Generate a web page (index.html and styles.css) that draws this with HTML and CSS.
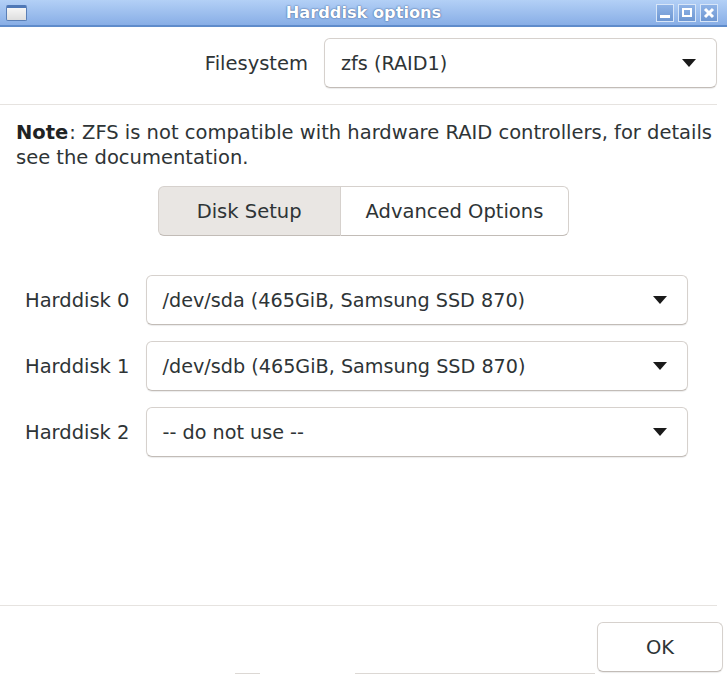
FILE: index.html
```html
<!DOCTYPE html>
<html lang="en">
<head>
    <meta charset="UTF-8">
    <title>Harddisk options</title>
    <link rel="stylesheet" href="styles.css">
</head>
<body>
    <div class="window">
        <div class="titlebar">
            <div class="app-icon"></div>
            <div class="title">Harddisk options</div>
            <div class="wm-buttons">
                <div class="wm-btn"><span class="min-bar"></span></div>
                <div class="wm-btn"><span class="max-box"></span></div>
                <div class="wm-btn">
                    <svg width="12" height="12" viewBox="0 0 12 12"><path d="M2 2 L10 10 M10 2 L2 10" stroke="#fff" stroke-width="3"/></svg>
                </div>
            </div>
        </div>

        <div class="content">
            <div class="fs-row">
                <label>Filesystem</label>
                <div class="select fs-select">
                    <span>zfs (RAID1)</span>
                    <svg class="arrow" width="16" height="10" viewBox="0 0 16 10"><path d="M1 1 H15 L8 9 Z" fill="#1a1a1a"/></svg>
                </div>
            </div>

            <div class="separator"></div>

            <p class="note"><b>Note</b>: ZFS is not compatible with hardware RAID controllers, for details see the documentation.</p>

            <div class="tabs">
                <div class="tab active">Disk Setup</div>
                <div class="tab">Advanced Options</div>
            </div>

            <div class="disks">
                <div class="disk-row">
                    <label>Harddisk 0</label>
                    <div class="select">
                        <span>/dev/sda (465GiB, Samsung SSD 870)</span>
                        <svg class="arrow" width="16" height="10" viewBox="0 0 16 10"><path d="M1 1 H15 L8 9 Z" fill="#1a1a1a"/></svg>
                    </div>
                </div>
                <div class="disk-row">
                    <label>Harddisk 1</label>
                    <div class="select">
                        <span>/dev/sdb (465GiB, Samsung SSD 870)</span>
                        <svg class="arrow" width="16" height="10" viewBox="0 0 16 10"><path d="M1 1 H15 L8 9 Z" fill="#1a1a1a"/></svg>
                    </div>
                </div>
                <div class="disk-row">
                    <label>Harddisk 2</label>
                    <div class="select">
                        <span>-- do not use --</span>
                        <svg class="arrow" width="16" height="10" viewBox="0 0 16 10"><path d="M1 1 H15 L8 9 Z" fill="#1a1a1a"/></svg>
                    </div>
                </div>
            </div>
        </div>

        <div class="footer">
            <div class="separator"></div>
            <div class="actions">
                <button class="ok">OK</button>
            </div>
            <div class="ghost">
                <span class="g1"></span>
                <span class="g2"></span>
            </div>
        </div>
    </div>
</body>
</html>
```

FILE: styles.css
```css
body {
    margin: 0;
    font-family: "DejaVu Sans", sans-serif;
    font-size: 19.5px;
    color: #2e3436;
    background: #fff;
}
.window {
    width: 727px;
    height: 675px;
    display: flex;
    flex-direction: column;
    overflow: hidden;
}
.titlebar {
    height: 25px;
    display: grid;
    grid-template-columns: 1fr auto 1fr;
    align-items: center;
    background: linear-gradient(to bottom, #b3d0f6, #88aee6);
    border-bottom: 2px solid #5f8ccb;
}
.app-icon {
    width: 19px;
    height: 12px;
    margin-left: 6px;
    background: linear-gradient(to bottom, #f6f6f6, #dedede);
    border: 1px solid #5a7fb6;
    border-top: 3px solid #4f78b6;
    border-radius: 2px;
}
.title {
    text-align: center;
    font-weight: bold;
    font-size: 16.2px;
    color: #fff;
    margin-top: -1px;
    text-shadow: 0 0 2px #4a6c9e, 0 0 1px #4a6c9e;
}
.wm-buttons {
    display: flex;
    justify-content: flex-end;
    gap: 4px;
    margin-right: 9px;
}
.wm-btn {
    width: 18px;
    height: 18px;
    background: linear-gradient(to bottom, #8fb3e6, #6e97d2);
    border: 1px solid #d8e6f8;
    box-sizing: border-box;
    display: flex;
    align-items: center;
    justify-content: center;
    position: relative;
}
.min-bar {
    position: absolute;
    left: 3px;
    right: 3px;
    bottom: 3px;
    height: 3px;
    background: #fff;
}
.max-box {
    width: 6px;
    height: 5px;
    border: 2px solid #fff;
}
.content {
    flex: 1;
    padding: 0 0 0 16px;
}
.fs-row {
    display: flex;
    justify-content: flex-end;
    align-items: center;
    gap: 16px;
    margin-top: 11px;
    padding-right: 10px;
}
.select {
    height: 50px;
    box-sizing: border-box;
    border: 1px solid #d6d1cd;
    border-bottom-color: #c2bcb7;
    border-radius: 6px;
    box-shadow: 0 1px 1px rgba(0, 0, 0, 0.08);
    display: flex;
    align-items: center;
    justify-content: space-between;
    padding: 0 19px 0 16px;
    background: #fff;
}
.select span {
    font-size: 19.2px;
}
.fs-select {
    width: 393px;
}
.separator {
    height: 1px;
    background: #e6e3e0;
    margin-right: 10px;
}
.content > .separator {
    margin-top: 16px;
    margin-left: -16px;
}
.note {
    margin: 15px 10px 0 0;
    line-height: 25px;
}
.note b {
    color: #1f2324;
    margin-right: 1px;
}
.tabs {
    display: flex;
    justify-content: center;
    margin-top: 16px;
    margin-left: -16px;
}
.tab {
    height: 50px;
    box-sizing: border-box;
    border: 1px solid #d6d1cd;
    border-bottom-color: #c2bcb7;
    display: flex;
    align-items: center;
    padding: 0 25px;
    background: #fff;
}
.tab:first-child {
    border-radius: 6px 0 0 6px;
    padding: 0 38px;
}
.tab:last-child {
    border-radius: 0 6px 6px 0;
    border-left: none;
}
.tab.active {
    background: #e9e6e3;
}
.disks {
    margin-top: 39px;
    display: flex;
    flex-direction: column;
    gap: 16px;
    padding-left: 9px;
}
.disk-row {
    display: flex;
    align-items: center;
    gap: 16px;
}
.disk-row .select {
    width: 542px;
}
.footer {
    height: 70px;
}
.footer .separator {
    margin-right: 10px;
}
.actions {
    display: flex;
    justify-content: flex-end;
    padding-top: 16px;
    padding-right: 4px;
}
.ok {
    width: 126px;
    height: 50px;
    font-family: "DejaVu Sans", sans-serif;
    font-size: 19.5px;
    color: #2e3436;
    background: #fff;
    border: 1px solid #d6d1cd;
    border-bottom-color: #c2bcb7;
    border-radius: 6px;
    box-shadow: 0 1px 1px rgba(0, 0, 0, 0.08);
}
.ghost {
    display: flex;
    height: 1px;
    margin-top: 1px;
}
.ghost span {
    height: 1px;
    background: #dcd8d4;
}
.g1 {
    width: 25px;
    margin-left: 235px;
}
.g2 {
    width: 240px;
    margin-left: 95px;
}
```
